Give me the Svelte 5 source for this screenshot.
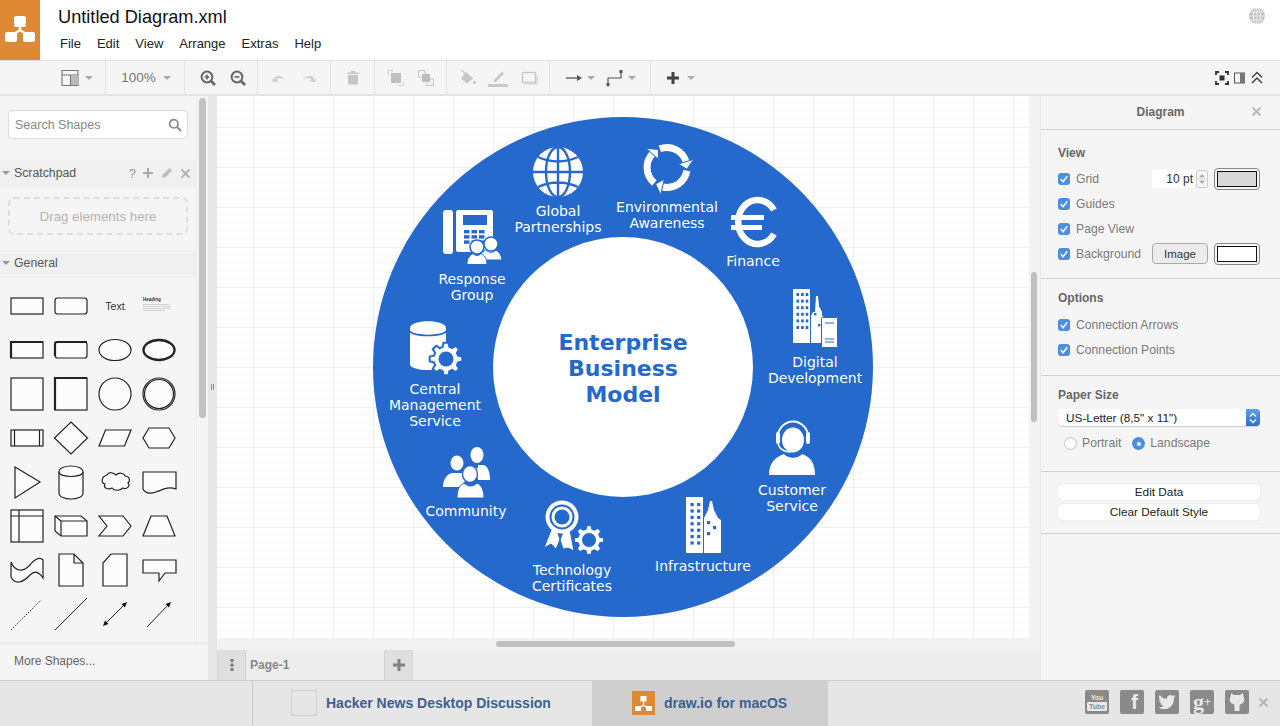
<script>
  const blue = '#2469cb';
  const menu = ['File', 'Edit', 'View', 'Arrange', 'Extras', 'Help'];

  function gear(cx, cy, r, ri, teeth = 8) {
    let d = '';
    const step = (Math.PI * 2) / teeth;
    for (let i = 0; i < teeth; i++) {
      const a = i * step - Math.PI / 2;
      const pts = [
        [ri, a - step * 0.34],
        [r, a - step * 0.19],
        [r, a + step * 0.19],
        [ri, a + step * 0.34]
      ];
      for (const [rad, an] of pts) {
        d += (d ? 'L' : 'M') + (cx + rad * Math.cos(an)).toFixed(1) + ' ' + (cy + rad * Math.sin(an)).toFixed(1);
      }
    }
    return d + 'Z';
  }

  function pol(cx, cy, r, deg) {
    const a = ((deg - 90) * Math.PI) / 180;
    return (cx + r * Math.cos(a)).toFixed(1) + ' ' + (cy + r * Math.sin(a)).toFixed(1);
  }

  const recycle = [95, 215, 335].map((tip) => {
    const cx = 667, cy = 167.5, r = 20;
    const s = tip - 116;
    const e = tip - 22;
    return {
      arc: `M${pol(cx, cy, r, s)}A${r} ${r} 0 0 1 ${pol(cx, cy, r, e)}`,
      head: `M${pol(cx, cy, r + 8, e)}L${pol(cx, cy, r - 8, e)}L${pol(cx, cy, r, tip)}Z`
    };
  });

  const labels = [
    { x: 558, lines: [['Global', 216], ['Partnerships', 232]] },
    { x: 667, lines: [['Environmental', 212], ['Awareness', 228]] },
    { x: 753, lines: [['Finance', 266]] },
    { x: 815, lines: [['Digital', 367], ['Development', 383]] },
    { x: 792, lines: [['Customer', 495], ['Service', 511]] },
    { x: 703, lines: [['Infrastructure', 571]] },
    { x: 572, lines: [['Technology', 575], ['Certificates', 591]] },
    { x: 466, lines: [['Community', 516]] },
    { x: 435, lines: [['Central', 394], ['Management', 410], ['Service', 426]] },
    { x: 472, lines: [['Response', 284], ['Group', 300]] }
  ];

  function grid(x0, y0, cols, rows, dx, dy, w, h) {
    const out = [];
    for (let r = 0; r < rows; r++) for (let c = 0; c < cols; c++) out.push({ x: x0 + c * dx, y: y0 + r * dy, w, h });
    return out;
  }
  const phoneKeys = grid(464, 230, 3, 3, 7.5, 5.2, 5.5, 3.4);
  const digitalWin = grid(796.5, 293, 3, 6, 4.6, 6.6, 2.6, 3);
  const infraWin = grid(690.5, 503, 2, 7, 6.6, 6.4, 3.2, 3.2);
</script>

<div class="app">
  <header class="top">
    <div class="logo">
      <svg width="40" height="60" viewBox="0 0 40 60">
        <path d="M20 26V32M20 30L11 36M20 30L29 36" stroke="#fff" stroke-width="2.4" fill="none" />
        <rect x="14" y="16" width="12" height="11" rx="2" fill="#fff" />
        <rect x="5" y="32" width="12" height="10" rx="2" fill="#fff" />
        <rect x="23" y="32" width="12" height="10" rx="2" fill="#fff" />
      </svg>
    </div>
    <div class="titles">
      <div class="filename">Untitled Diagram.xml</div>
      <nav class="menu">
        {#each menu as m}<span>{m}</span>{/each}
      </nav>
    </div>
    <svg class="globe" width="18" height="18" viewBox="0 0 18 18">
      <circle cx="9" cy="9" r="8" fill="#c4c4c4" />
      <g stroke="#f2f2f2" stroke-width="0.9" fill="none">
        <ellipse cx="9" cy="9" rx="3.6" ry="8" />
        <path d="M9 1V17M1 9H17M2.2 5H15.8M2.2 13H15.8" />
      </g>
    </svg>
  </header>

  <div class="toolbar">
    <div class="tg tg-first">
      <svg width="18" height="18" viewBox="0 0 18 18">
        <path d="M1 1.5H17V16.5H1ZM1 6H17M9.5 6V16.5" fill="none" stroke="#777" stroke-width="1.1" />
        <rect x="10" y="6.5" width="6.5" height="9.5" fill="#bbb" />
      </svg>
      <i class="caret"></i>
    </div>
    <div class="tg tg-zoom"><span class="pct">100%</span><i class="caret"></i></div>
    <div class="tg gap10 tg-mag">
      <svg width="20" height="20" viewBox="0 0 20 20">
        <circle cx="9" cy="9" r="5.4" fill="none" stroke="#666" stroke-width="2" />
        <path d="M13 13L17 17" stroke="#666" stroke-width="2.6" />
        <path d="M6.5 9H11.5M9 6.5V11.5" stroke="#666" stroke-width="1.6" />
      </svg>
      <svg width="20" height="20" viewBox="0 0 20 20">
        <circle cx="9" cy="9" r="5.4" fill="none" stroke="#666" stroke-width="2" />
        <path d="M13 13L17 17" stroke="#666" stroke-width="2.6" />
        <path d="M6.5 9H11.5" stroke="#666" stroke-width="1.6" />
      </svg>
    </div>
    <div class="tg gap10">
      <svg width="20" height="20" viewBox="0 0 20 20">
        <path d="M4 12.5C6 7 12 6.5 16.5 12C13 9.5 9.5 9.5 7.5 11.5L9.5 13.5L3.5 14V8.5Z" fill="#cfcfcf" />
      </svg>
      <svg width="20" height="20" viewBox="0 0 20 20">
        <path d="M16 12.5C14 7 8 6.5 3.5 12C7 9.5 10.5 9.5 12.5 11.5L10.5 13.5L16.5 14V8.5Z" fill="#cfcfcf" />
      </svg>
    </div>
    <div class="tg">
      <svg width="20" height="20" viewBox="0 0 20 20">
        <path d="M4 4.5H16V6H4ZM8 3H12V4.5H8ZM5 7H15V16.5H5Z" fill="#c6c6c6" />
      </svg>
    </div>
    <div class="tg gap10">
      <svg width="20" height="20" viewBox="0 0 20 20">
        <path d="M2.5 7V2.5H7M13 17.5H17.5V13" fill="none" stroke="#d0d0d0" />
        <rect x="5" y="5" width="10" height="10" fill="#c0c0c0" />
      </svg>
      <svg width="20" height="20" viewBox="0 0 20 20">
        <path d="M2.5 2.5H9V9H2.5ZM11 11H17.5V17.5H11Z" fill="none" stroke="#c8c8c8" />
        <rect x="6" y="6" width="8" height="8" fill="#bdbdbd" />
      </svg>
    </div>
    <div class="tg gap10">
      <svg width="20" height="20" viewBox="0 0 20 20">
        <path d="M9 4L16 10.5L10 15.5L4 10.5Z" fill="#c8c8c8" />
        <path d="M4 2L9 6" stroke="#c8c8c8" stroke-width="1.4" />
        <circle cx="17.5" cy="14.5" r="1.5" fill="#c8c8c8" />
      </svg>
      <svg width="22" height="20" viewBox="0 0 22 20">
        <path d="M7 12L15 3.5L17 5.5L9 14H7Z" fill="#c8c8c8" />
        <rect x="1" y="16" width="20" height="3" fill="#c8c8c8" />
      </svg>
      <svg width="20" height="20" viewBox="0 0 20 20">
        <rect x="3.5" y="4.5" width="13" height="10" fill="#f6f6f6" stroke="#c8c8c8" stroke-width="1.4" />
        <path d="M5 16H18V7" fill="none" stroke="#dadada" stroke-width="1.6" />
      </svg>
    </div>
    <div class="tg gap10">
      <div class="ic">
        <svg width="20" height="20" viewBox="0 0 20 20">
          <path d="M2 10H14" stroke="#555" stroke-width="1.3" />
          <path d="M13 7L18 10L13 13Z" fill="#555" />
        </svg>
        <i class="caret"></i>
      </div>
      <div class="ic">
        <svg width="20" height="20" viewBox="0 0 20 20">
          <path d="M3 16V10H16V4" fill="none" stroke="#555" stroke-width="1.2" />
          <rect x="1.5" y="15" width="3" height="3" fill="#555" />
          <rect x="14.5" y="2" width="3" height="3" fill="#555" />
        </svg>
        <i class="caret"></i>
      </div>
    </div>
    <div class="tg tg-plus">
      <svg width="16" height="16" viewBox="0 0 16 16">
        <path d="M8 2V14M2 8H14" stroke="#444" stroke-width="3" />
      </svg>
      <i class="caret"></i>
    </div>
    <div class="spacer"></div>
    <div class="tg-right">
      <svg width="14" height="14" viewBox="0 0 14 14">
        <path d="M1 4V1H4M10 1H13V4M13 10V13H10M4 13H1V10" fill="none" stroke="#333" stroke-width="1.8" />
        <rect x="4.5" y="4.5" width="5" height="5" fill="#333" />
      </svg>
      <svg width="12" height="12" viewBox="0 0 12 12">
        <rect x="0.5" y="1" width="10" height="10" fill="#f5f5f5" stroke="#555" />
        <rect x="6" y="1" width="5" height="10" fill="#777" />
      </svg>
      <svg width="12" height="14" viewBox="0 0 12 14">
        <path d="M1 6.5L6 1.5L11 6.5M1 12L6 7L11 12" fill="none" stroke="#444" stroke-width="1.5" />
      </svg>
    </div>
  </div>

  <div class="main">
    <aside class="side">
      <div class="side-scroll">
        <div class="search">
          <span>Search Shapes</span>
          <svg width="14" height="14" viewBox="0 0 14 14">
            <circle cx="5.8" cy="5.8" r="4.2" fill="none" stroke="#888" stroke-width="1.7" />
            <path d="M9 9L13 13" stroke="#888" stroke-width="2" />
          </svg>
        </div>
        <div class="sec-head scratch">
          <i class="caret small"></i><span class="sec-name">Scratchpad</span>
          <div class="sec-tools">
            <span class="q">?</span>
            <svg width="12" height="12" viewBox="0 0 12 12"><path d="M6 1V11M1 6H11" stroke="#aaa" stroke-width="2" /></svg>
            <svg width="14" height="14" viewBox="0 0 14 14"><path d="M2 12L3 8.5L9.5 2L12 4.5L5.5 11Z" fill="#bbb" /></svg>
            <svg width="11" height="11" viewBox="0 0 11 11"><path d="M1.5 1.5L9.5 9.5M9.5 1.5L1.5 9.5" stroke="#a9b4c0" stroke-width="2" /></svg>
          </div>
        </div>
        <div class="drop">Drag elements here</div>
        <div class="sec-head general"><i class="caret small"></i><span class="sec-name">General</span></div>
        <div class="shapes">
          <svg viewBox="0 0 44 44"><rect x="6" y="14" width="32" height="16" /></svg>
          <svg viewBox="0 0 44 44"><rect x="6" y="14" width="32" height="16" rx="2.5" /></svg>
          <svg viewBox="0 0 44 44"><text class="t" x="22" y="25.5">Text</text></svg>
          <svg viewBox="0 0 44 44">
            <text class="h" x="6" y="17">Heading</text>
            <path class="para" d="M6 20.5H32M6 22.5H34M6 24.5H33M6 26.5H28" />
          </svg>

          <svg viewBox="0 0 44 44"><rect x="6" y="14" width="32" height="16" /><path class="thick" d="M6 30V14H38" /></svg>
          <svg viewBox="0 0 44 44"><rect x="6" y="14" width="32" height="16" rx="2.5" /><path class="thick" d="M6 28V16Q6 14 8 14H38" /></svg>
          <svg viewBox="0 0 44 44"><ellipse cx="22" cy="22" rx="16" ry="10.5" /></svg>
          <svg viewBox="0 0 44 44"><ellipse cx="22" cy="22" rx="15.5" ry="10" stroke-width="2.4" /></svg>

          <svg viewBox="0 0 44 44"><rect x="6" y="6" width="32" height="32" /></svg>
          <svg viewBox="0 0 44 44"><rect x="6" y="6" width="32" height="32" /><path class="thick" d="M6 38V6H38" /></svg>
          <svg viewBox="0 0 44 44"><circle cx="22" cy="22" r="16" /></svg>
          <svg viewBox="0 0 44 44"><circle cx="22" cy="22" r="16" /><circle cx="22" cy="22" r="14.5" /></svg>

          <svg viewBox="0 0 44 44"><rect x="6" y="14" width="32" height="16" /><path d="M9.5 14V30M34.5 14V30" /></svg>
          <svg viewBox="0 0 44 44"><path d="M22 6L38.5 22L22 38L5.5 22Z" /></svg>
          <svg viewBox="0 0 44 44"><path d="M12.5 14H38L31.5 30H6Z" /></svg>
          <svg viewBox="0 0 44 44"><path d="M12 12H32L38 22L32 32H12L6 22Z" /></svg>

          <svg viewBox="0 0 44 44"><path d="M10 7L35 22L10 38Z" /></svg>
          <svg viewBox="0 0 44 44"><path d="M10 12C10 4 34 4 34 12V33C34 41 10 41 10 33Z" /><path d="M10 12C10 18 34 18 34 12" /></svg>
          <svg viewBox="0 0 44 44"><path d="M14 15C16 11 21 13 23 15C26 12 31 13 32 16C36 16 38 20 35 23C38 26 33 30 30 28C27 31 21 31 19 28C15 30 10 28 12 24C8 23 8 17 14 15Z" /></svg>
          <svg viewBox="0 0 44 44"><path d="M6 12H39V29C31 26 25 30 19 32C13 34 8 33 6 29Z" /></svg>

          <svg viewBox="0 0 44 44"><rect x="6" y="6" width="32" height="32" /><path d="M6 12H38M14 6V38" /></svg>
          <svg viewBox="0 0 44 44"><path d="M6 12H32L38 17V32H12L6 27Z" /><path d="M12 17H38M12 17V32M12 17L6 12" /></svg>
          <svg viewBox="0 0 44 44"><path d="M6 12H30L38 22L30 32H6L14 22Z" /></svg>
          <svg viewBox="0 0 44 44"><path d="M14 12H30L38 32H6Z" /></svg>

          <svg viewBox="0 0 44 44"><path d="M6 14C10 24 18 24 24 18C29 12 34 8 38 12V30C34 24 30 22 25 27C18 35 10 37 6 29Z" /></svg>
          <svg viewBox="0 0 44 44"><path d="M10 6H25L34 15V38H10ZM25 6V15H34" /></svg>
          <svg viewBox="0 0 44 44"><path d="M18 6H34V38H10V15Z" /></svg>
          <svg viewBox="0 0 44 44"><path d="M6 12H39V25H28L22 33V25H6Z" /></svg>

          <svg viewBox="0 0 44 44"><path class="line" stroke-dasharray="1.5 1.5" d="M6 38L36 8" /></svg>
          <svg viewBox="0 0 44 44"><path class="line" d="M6 38L38 6" /></svg>
          <svg viewBox="0 0 44 44">
            <path class="line" d="M12 32L32 12" />
            <path class="fillk" d="M34 10L32 15.5L28.5 12ZM10 34L12 28.5L15.5 32Z" />
          </svg>
          <svg viewBox="0 0 44 44">
            <path class="line" d="M10 35L32 12" />
            <path class="fillk" d="M34 10L32 15.5L28.5 12Z" />
          </svg>
        </div>
      </div>
      <div class="thumb-v-side"></div>
      <div class="more">More Shapes...</div>
    </aside>
    <div class="splitter"><span></span></div>

    <div class="center">
      <div class="scroll">
        <div class="canvas">
          <svg class="diagram" width="500" height="500" viewBox="373 117 500 500">
            <circle cx="623" cy="367" r="250" fill={blue} />
            <circle cx="623" cy="367" r="130" fill="#fff" />

            <!-- globe -->
            <circle cx="558" cy="172" r="25" fill="#fff" />
            <g fill="none" stroke={blue} stroke-width="2.4">
              <ellipse cx="558" cy="172" rx="12" ry="25" />
              <path d="M558 147V197M533 172H583M538 157Q558 166 578 157M538 187Q558 178 578 187" />
            </g>

            <!-- recycle -->
            {#each recycle as r}
              <path d={r.arc} fill="none" stroke="#fff" stroke-width="7" />
            {/each}
            {#each recycle as r}
              <path d={r.head} fill="#fff" stroke={blue} stroke-width="1" />
            {/each}

            <!-- euro -->
            <path d="M774 210A19.5 22 0 1 0 774 234" fill="none" stroke="#fff" stroke-width="6.5" />
            <rect x="731" y="215" width="33" height="5" fill="#fff" />
            <rect x="731" y="225" width="31" height="5" fill="#fff" />

            <!-- digital -->
            <rect x="793" y="289" width="17" height="54" fill="#fff" />
            {#each digitalWin as w}<rect x={w.x} y={w.y} width={w.w} height={w.h} fill={blue} />{/each}
            <path d="M811 343V316L813 312H815L816 296H818L819 306L822 312V316L826 318V343Z" fill="#fff" />
            <rect x="814" y="313" width="2.4" height="2.4" fill={blue} />
            <rect x="818" y="324" width="2.4" height="2.4" fill={blue} />
            <rect x="821.5" y="317.5" width="16" height="30" rx="1" fill="#fff" stroke={blue} stroke-width="1" />
            <path d="M825 323H834M825 339H834M825 342H834" stroke={blue} stroke-width="1.2" />

            <!-- customer -->
            <path d="M769 475C769 462 776 457 784 454C788 459 798 459 802 454C810 457 815 462 815 475Z" fill="#fff" />
            <ellipse cx="793" cy="440" rx="11" ry="12.5" fill="#fff" />
            <path d="M777.5 438A15.5 16.5 0 0 1 808.5 438" fill="none" stroke="#fff" stroke-width="2" />
            <rect x="776" y="432" width="4" height="12" rx="2" fill="#fff" />
            <rect x="806" y="432" width="4" height="12" rx="2" fill="#fff" />
            <path d="M778 444C780 450 786 452 791 452" fill="none" stroke="#fff" stroke-width="1.4" />

            <!-- infrastructure -->
            <rect x="686" y="497" width="17" height="56" fill="#fff" />
            {#each infraWin as w}<rect x={w.x} y={w.y} width={w.w} height={w.h} fill={blue} />{/each}
            <path d="M704 553V518L708 510L710 501H712L714 510L718 518L721 520V553Z" fill="#fff" />
            <rect x="707" y="521" width="3.2" height="3.2" fill={blue} />
            <rect x="713" y="526" width="3.2" height="3.2" fill={blue} />
            <rect x="707" y="532" width="3.2" height="3.2" fill={blue} />

            <!-- certificate -->
            <path d="M553 525L544 548L551 544L556 549L564 530ZM570 530L574 551L568 548L563 549L557 530Z" fill="#fff" stroke={blue} stroke-width="1" />
            <circle cx="562" cy="517" r="16.5" fill="#fff" />
            <circle cx="562" cy="517" r="12.5" fill={blue} />
            <circle cx="562" cy="517" r="10.5" fill="#fff" />
            <circle cx="562" cy="517" r="7.5" fill={blue} />
            <path d={gear(589, 540, 15, 11.5)} fill="#fff" stroke={blue} stroke-width="1.5" />
            <circle cx="589" cy="540" r="7" fill={blue} />

            <!-- community -->
            <path d="M443 487C443 478 448 474 452 473L462 473L466 480L460 487ZM490 480H478V465H484C488 467 490 472 490 480Z" fill="#fff" />
            <ellipse cx="457" cy="463" rx="6.5" ry="7.5" fill="#fff" />
            <ellipse cx="477" cy="455" rx="6.5" ry="8" fill="#fff" />
            <path d="M470 466L466 474L478 478L484 470Z" fill="#fff" />
            <ellipse cx="470" cy="474" rx="7.5" ry="8.5" fill="#fff" stroke={blue} stroke-width="1.4" />
            <path d="M457 498C457 489 460 485 464 483C468 487 473 487 477 483C481 485 484 489 484 498Z" fill="#fff" stroke={blue} stroke-width="1" />

            <!-- central -->
            <path d="M410 328C410 319 446 319 446 328V364C446 372 410 372 410 364Z" fill="#fff" />
            <path d="M410 331C412 337 444 337 446 331" fill="none" stroke={blue} stroke-width="1.6" />
            <path d={gear(446, 359, 16.5, 12.5)} fill="#fff" stroke={blue} stroke-width="2" />
            <circle cx="446" cy="359" r="7.5" fill={blue} />

            <!-- phone -->
            <rect x="443" y="210" width="10" height="44" rx="3" fill="#fff" />
            <rect x="456" y="210" width="37" height="42" rx="2" fill="#fff" />
            <rect x="463" y="215" width="24" height="10" fill={blue} />
            {#each phoneKeys as k}<rect x={k.x} y={k.y} width={k.w} height={k.h} fill={blue} />{/each}
            <circle cx="491" cy="244" r="7" fill="#fff" stroke={blue} stroke-width="1.4" />
            <path d="M478 260C480 252 484 251 486 250C489 253 493 253 496 250C499 252 501 254 502 260Z" fill="#fff" stroke={blue} stroke-width="1" />
            <circle cx="477" cy="247" r="7" fill="#fff" stroke={blue} stroke-width="1.6" />
            <path d="M467 264.5C467 258 470 255 473 253.5C475 256 479 256 481 253.5C484 255 487 258 487 264.5Z" fill="#fff" stroke={blue} stroke-width="1" />

            {#each labels as l}
              {#each l.lines as [t, y]}
                <text class="lbl" x={l.x} y={y}>{t}</text>
              {/each}
            {/each}

            <text class="ttl" x="623" y="350">Enterprise</text>
            <text class="ttl" x="623" y="376">Business</text>
            <text class="ttl" x="623" y="402">Model</text>
          </svg>
        </div>
        <div class="thumb-v"></div>
        <div class="thumb-h"></div>
      </div>
      <div class="tabs">
        <div class="tab-btn">
          <svg width="4" height="14" viewBox="0 0 4 14"><path d="M0.5 1H3.5V4H0.5ZM0.5 5.5H3.5V8.5H0.5ZM0.5 10H3.5V13H0.5Z" fill="#777" /></svg>
        </div>
        <div class="tab-page">Page-1</div>
        <div class="tab-btn plus">
          <svg width="14" height="14" viewBox="0 0 14 14"><path d="M7 1V13M1 7H13" stroke="#808080" stroke-width="3" /></svg>
        </div>
      </div>
    </div>

    <aside class="panel">
      <div class="panel-head">
        <span>Diagram</span>
        <svg class="panel-x" width="11" height="11" viewBox="0 0 11 11"><path d="M1.5 1.5L9.5 9.5M9.5 1.5L1.5 9.5" stroke="#b4bcc6" stroke-width="2" /></svg>
      </div>

      <section class="ps s-view">
        <h4>View</h4>
        <div class="row">
          <span class="cb"><svg viewBox="0 0 13 13"><path d="M3 6.5L5.5 9.5L10 3.5" /></svg></span><span class="lab">Grid</span>
          <div class="right">
            <div class="spin"><span class="num">10 pt</span></div>
            <div class="stepper">
              <svg width="12" height="18" viewBox="0 0 12 18"><path d="M2.5 7L6 3L9.5 7ZM2.5 11L6 15L9.5 11Z" fill="#aaa" /><path d="M1 9H11" stroke="#ccc" /></svg>
            </div>
            <div class="swatch"><i class="sw-grey"></i></div>
          </div>
        </div>
        <div class="row"><span class="cb"><svg viewBox="0 0 13 13"><path d="M3 6.5L5.5 9.5L10 3.5" /></svg></span><span class="lab">Guides</span></div>
        <div class="row"><span class="cb"><svg viewBox="0 0 13 13"><path d="M3 6.5L5.5 9.5L10 3.5" /></svg></span><span class="lab">Page View</span></div>
        <div class="row">
          <span class="cb"><svg viewBox="0 0 13 13"><path d="M3 6.5L5.5 9.5L10 3.5" /></svg></span><span class="lab">Background</span>
          <div class="right">
            <div class="imgbtn">Image</div>
            <div class="swatch"><i></i></div>
          </div>
        </div>
      </section>

      <section class="ps s-opt">
        <h4>Options</h4>
        <div class="row"><span class="cb"><svg viewBox="0 0 13 13"><path d="M3 6.5L5.5 9.5L10 3.5" /></svg></span><span class="lab">Connection Arrows</span></div>
        <div class="row"><span class="cb"><svg viewBox="0 0 13 13"><path d="M3 6.5L5.5 9.5L10 3.5" /></svg></span><span class="lab">Connection Points</span></div>
      </section>

      <section class="ps s-paper">
        <h4>Paper Size</h4>
        <div class="select">
          <span>US-Letter (8,5" x 11")</span>
          <div class="sel-h">
            <svg width="8" height="12" viewBox="0 0 8 12"><path d="M1 4.5L4 1.5L7 4.5M1 7.5L4 10.5L7 7.5" fill="none" stroke="#fff" stroke-width="1.3" /></svg>
          </div>
        </div>
        <div class="radios">
          <i class="rd"></i><span class="lab">Portrait</span>
          <i class="rd on"></i><span class="lab">Landscape</span>
        </div>
      </section>

      <section class="ps s-btn">
        <div class="wbtn">Edit Data</div>
        <div class="wbtn">Clear Default Style</div>
      </section>
    </aside>
  </div>

  <footer class="foot">
    <div class="f-empty"></div>
    <div class="f-item f-hn"><i class="ph"></i><span>Hacker News Desktop Discussion</span></div>
    <div class="f-item f-dr">
      <svg width="23" height="24" viewBox="0 0 23 24">
        <rect width="23" height="24" fill="#de8a34" />
        <path d="M11.5 10V14M11.5 14L6 18M11.5 14L17 18" stroke="#fff" stroke-width="1.4" fill="none" />
        <rect x="8.5" y="5" width="6" height="5.5" fill="#fff" />
        <rect x="3" y="15" width="6" height="5" fill="#fff" />
        <rect x="14" y="15" width="6" height="5" fill="#fff" />
      </svg>
      <span>draw.io for macOS</span>
    </div>
    <div class="social">
      <div class="so so-yt"><b>You</b><b class="tube">Tube</b></div>
      <div class="so so-f">f</div>
      <div class="so">
        <svg width="18" height="16" viewBox="0 0 18 16"><path d="M17.5 2.5C16.8 2.8 16 3 15.3 3.1C16 2.6 16.7 1.9 17 1C16.2 1.4 15.5 1.7 14.6 1.9C13 0.2 9 0.8 8.8 4.8C6 4.7 3.3 3.2 1.5 1C0.5 2.6 1 4.9 2.7 5.9C2.1 5.9 1.5 5.7 1 5.5C1 7.3 2.2 8.8 4 9.2C3.4 9.3 2.9 9.4 2.3 9.3C2.8 10.8 4.2 11.8 5.8 11.8C4.3 13 2.3 13.6 0.5 13.4C7 17.5 16.3 13.5 15.8 4.5C16.4 4 17 3.3 17.5 2.5Z" fill="#e9e9e9" /></svg>
      </div>
      <div class="so so-g"><span>g</span><em>+</em></div>
      <div class="so">
        <svg width="18" height="20" viewBox="0 0 18 20"><path d="M3 1L6 3H12L15 1L15.5 5C17 7 16.5 11 13 12C12 12.3 11.5 12.7 11.5 14V19H6.5V14C6.5 12.7 6 12.3 5 12C1.5 11 1 7 2.5 5Z" fill="#e9e9e9" /></svg>
      </div>
      <svg class="f-x" width="11" height="11" viewBox="0 0 11 11"><path d="M1.5 1.5L9.5 9.5M9.5 1.5L1.5 9.5" stroke="#a9b6c6" stroke-width="1.8" /></svg>
    </div>
  </footer>
</div>

<style>
  :global(body) { margin: 0; background: #fff; }
  .app {
    width: 1280px; height: 726px; display: flex; flex-direction: column; overflow: hidden;
    font-family: "Liberation Sans", Arial, sans-serif; color: #333;
  }
  .top { height: 60px; display: flex; position: relative; background: #fff; flex: none; }
  .logo { width: 40px; height: 60px; background: #de8a34; flex: none; }
  .titles { padding-left: 18px; }
  .filename { font-size: 18.2px; line-height: 21px; margin-top: 7px; color: #111; }
  .menu { display: flex; gap: 16px; margin: 8px 0 0 2px; font-size: 13px; line-height: 16px; color: #222; }
  .globe { position: absolute; right: 14px; top: 7px; }

  .toolbar {
    height: 36px; flex: none; box-sizing: border-box; background: #f5f5f5;
    border-top: 1px solid #e2e2e2; border-bottom: 2px solid #e4e4e4;
    display: grid; grid-template-columns: 106px 79px 73px 73px 44px 72px 103px 101px 60px 1fr auto; align-items: stretch;
  }
  .tg { display: flex; align-items: center; justify-content: center; border-right: 1px solid #e4e4e4; box-sizing: border-box; }
  .tg-first { padding-left: 49px; gap: 6px; }
  .tg-zoom { gap: 7px; padding-left: 2px; }
  .tg-mag { padding-left: 4px; }
  .pct { font-size: 13.5px; color: #777; }
  .gap10 { gap: 10px; }
  .ic { display: flex; align-items: center; gap: 3px; }
  .tg-plus { border: 0; gap: 6px; padding-right: 2px; }
  .tg-right { display: flex; align-items: center; gap: 5px; padding-right: 17px; }
  .caret { display: block; width: 0; height: 0; border: 4.5px solid transparent; border-top: 4.5px solid #aaa; border-bottom: 0; }
  .caret.small { border-width: 4.5px 4.5px 0; border-top-color: #999; }

  .main { flex: 1; display: flex; min-height: 0; background: #f5f5f5; }
  .side { width: 208px; flex: none; position: relative; display: flex; flex-direction: column; background: #f5f5f5; }
  .side-scroll { flex: 1; min-height: 0; overflow: hidden; width: 197px; box-sizing: border-box; border-right: 1px solid #ededed; }
  .search {
    margin: 14px 0 0 8px; width: 180px; height: 29px; box-sizing: border-box; background: #fff;
    border: 1px solid #dcdcdc; border-radius: 4px; display: flex; align-items: center; justify-content: space-between;
    padding: 0 5px 0 6px; font-size: 12.5px; color: #888;
  }
  .sec-head { height: 28px; display: flex; align-items: center; background: #f0f0f0; font-size: 12.3px; color: #555; padding: 0 0 2px 2px; box-sizing: border-box; }
  .scratch { margin-top: 21px; }
  .sec-name { margin-left: 4px; }
  .sec-tools { margin-left: auto; display: flex; align-items: center; gap: 6px; padding-right: 5px; }
  .q { color: #999; font-size: 13px; }
  .drop {
    margin: 9px 0 0 8px; width: 180px; height: 38px; box-sizing: border-box; border: 2px dashed #dedede; border-radius: 6px;
    display: flex; align-items: center; justify-content: center; color: #b4b4b4; font-size: 13.3px;
  }
  .general { margin-top: 15px; }
  .shapes { display: grid; grid-template-columns: repeat(4, 44px); grid-auto-rows: 44px; padding: 6px 0 0 5px; }
  .shapes svg { width: 44px; height: 44px; display: block; fill: #fcfcfc; stroke: #222; stroke-width: 1.2; }
  .shapes .thick { fill: none; stroke-width: 2.2; }
  .shapes .line { fill: none; stroke-width: 1; }
  .shapes .fillk { fill: #111; stroke: none; }
  .shapes .t { font-size: 10.5px; text-anchor: middle; fill: #333; stroke: none; }
  .shapes .h { font-size: 4.5px; font-weight: bold; fill: #333; stroke: none; }
  .shapes .para { stroke: #c8c8c8; stroke-width: 0.8; fill: none; }
  .thumb-v-side { position: absolute; left: 199px; top: 2px; width: 7px; height: 320px; border-radius: 4px; background: #c2c2c2; }
  .more {
    height: 38px; flex: none; box-sizing: border-box; border-top: 3px solid #ececec; background: #f5f5f5;
    width: 208px; padding: 6px 0 0 14px; font-size: 12px; color: #666; line-height: 20px;
  }
  .splitter { width: 9px; flex: none; background: #e8e8e8; position: relative; }
  .splitter span {
    position: absolute; left: 2.5px; top: 288px; width: 1px; height: 6px; border-left: 1px solid #888; border-right: 1px solid #888;
  }

  .center { width: 823px; flex: none; display: flex; flex-direction: column; }
  .scroll {
    flex: 1; min-height: 0; position: relative; display: flex; box-sizing: border-box;
    padding: 0 11px 12px 0; background: #f2f2f2;
  }
  .canvas {
    flex: 1; overflow: hidden; background-color: #fff;
    background-image:
      linear-gradient(#eeeeee 1px, transparent 1px),
      linear-gradient(90deg, #eeeeee 1px, transparent 1px),
      linear-gradient(#f9f9f9 1px, transparent 1px),
      linear-gradient(90deg, #f9f9f9 1px, transparent 1px);
    background-size: 40px 40px, 40px 40px, 8px 8px, 8px 8px;
    background-position: 0 31px, 36px 0, 0 7px, 4px 0;
  }
  .diagram { display: block; margin: 21px 0 0 156px; }
  .lbl { font-family: "DejaVu Sans", Verdana, sans-serif; font-size: 14px; fill: #fff; text-anchor: middle; }
  .ttl { font-family: "DejaVu Sans", Verdana, sans-serif; font-size: 22px; font-weight: bold; fill: #2469cb; text-anchor: middle; }
  .thumb-v { position: absolute; left: 814px; top: 176px; width: 6px; height: 150px; border-radius: 3px; background: #c0c0c0; }
  .thumb-h { position: absolute; left: 279px; top: 545px; width: 239px; height: 6px; border-radius: 3px; background: #c0c0c0; }

  .tabs { height: 30px; flex: none; display: flex; background: #ededed; }
  .tab-btn {
    width: 29px; box-sizing: border-box; display: flex; align-items: center; justify-content: center;
    background: #dfdfdf; border-left: 1px solid #d4d4d4; border-right: 1px solid #d4d4d4;
  }
  .tab-page { width: 138px; padding-left: 4px; box-sizing: border-box; font-size: 12px; font-weight: bold; color: #888; line-height: 31px; }

  .panel { width: 240px; flex: none; box-sizing: border-box; background: #f5f5f5; border-left: 1px solid #e8e8e8; }
  .panel-head {
    height: 34px; box-sizing: border-box; border-bottom: 1px solid #d0d0d0; position: relative;
    display: flex; align-items: center; justify-content: center; font-size: 12px; font-weight: bold; color: #666; padding-bottom: 2px;
  }
  .panel-x { position: absolute; right: 18px; top: 10px; }
  .ps { box-sizing: border-box; border-bottom: 1px solid #d0d0d0; padding-left: 17px; padding-right: 20px; }
  .ps h4 { margin: 0; font-size: 12px; font-weight: bold; color: #666; line-height: 24px; height: 24px; }
  .row { height: 25px; display: flex; align-items: center; }
  .s-view { height: 149px; padding-top: 11px; }
  .s-view h4 { margin-bottom: 1px; }
  .s-opt { height: 97px; padding-top: 7px; }
  .s-opt h4 { margin-bottom: 2px; }
  .s-paper { height: 96px; padding-top: 7px; }
  .s-btn { height: 62px; padding-top: 12px; }
  .cb { width: 12px; height: 12px; border-radius: 3px; background: #4a8fe3; flex: none; margin-right: 6px; display: block; }
  .cb svg { display: block; width: 12px; height: 12px; fill: none; stroke: #fff; stroke-width: 1.6; }
  .lab { color: #7a7a7a; font-size: 12.2px; }
  .right { margin-left: auto; display: flex; align-items: center; }
  .spin { width: 44px; height: 18px; background: #fff; display: flex; align-items: center; justify-content: flex-end; font-size: 12px; color: #333; box-sizing: border-box; padding-right: 3px; }
  .stepper { width: 12px; height: 18px; margin-right: 6px; border: 1px solid #ccc; border-radius: 3px; box-sizing: border-box; display: flex; align-items: center; justify-content: center; overflow: hidden; background: #f5f5f5; }
  .swatch {
    width: 46px; height: 22px; box-sizing: border-box; border: 1px solid #888; border-radius: 4px; background: #f5f5f5;
    display: flex; align-items: center; justify-content: center;
  }
  .swatch i { display: block; width: 38px; height: 14px; border: 1px solid #111; background: #fff; }
  .swatch i.sw-grey { background: #d8d8d8; }
  .imgbtn {
    width: 56px; height: 21px; box-sizing: border-box; margin-right: 6px; border: 1px solid #aaa; border-radius: 4px;
    background: #ececec; display: flex; align-items: center; justify-content: center; font-size: 11.5px; color: #333;
  }
  .select {
    height: 17px; margin-top: 2px; background: #fff; border-radius: 4px; display: flex; align-items: center; justify-content: space-between;
    box-shadow: 0 1px 1px #ccc; font-size: 11.8px; color: #222; padding-left: 8px; overflow: hidden;
  }
  .sel-h { width: 14px; height: 17px; background: linear-gradient(#5f9ee9, #2a6fd0); display: flex; align-items: center; justify-content: center; }
  .radios { display: flex; align-items: center; height: 24px; margin-top: 5px; padding-left: 6px; }
  .rd { display: block; width: 13px; height: 13px; box-sizing: border-box; border: 1px solid #c4c4c4; border-radius: 50%; background: #fff; margin-right: 5px; }
  .radios .lab { margin-right: 11px; }
  .rd.on { background: #4a8fe3; border: 0; position: relative; }
  .rd.on::after { content: ""; position: absolute; left: 5px; top: 5px; width: 4px; height: 4px; background: #fff; border-radius: 50%; }
  .wbtn {
    height: 16px; background: #fff; border-radius: 3px; box-shadow: 0 0 1px #aaa; margin-bottom: 4px; display: flex; align-items: center;
    justify-content: center; font-size: 11.8px; color: #222;
  }

  .foot { height: 46px; flex: none; box-sizing: border-box; border-top: 1px solid #cfcfcf; background: #e6e6e6; display: flex; align-items: stretch; }
  .f-empty { width: 252px; border-right: 1px solid #c8c8c8; }
  .f-item { display: flex; align-items: center; font-size: 14px; font-weight: bold; color: #3e5f92; box-sizing: border-box; padding-bottom: 1px; }
  .f-hn { width: 339px; padding-left: 38px; gap: 9px; }
  .ph { display: block; width: 26px; height: 26px; box-sizing: border-box; border: 1px solid #cfcfcf; }
  .f-dr { width: 236px; background: #cfcfcf; padding-left: 40px; gap: 9px; }
  .social { margin-left: auto; display: flex; align-items: center; gap: 11px; padding: 0 11px 3px 0; }
  .so {
    width: 24px; height: 24px; border-radius: 2px; background: #8a8a8a; color: #e9e9e9; position: relative; overflow: hidden;
    display: flex; align-items: center; justify-content: center; font-weight: bold;
  }
  .so-yt { flex-direction: column; font-size: 7px; line-height: 9px; }
  .so-yt .tube { background: #e9e9e9; color: #8a8a8a; padding: 0 2px; border-radius: 1px; }
  .so-f { font-size: 21px; justify-content: flex-end; padding-right: 6px; box-sizing: border-box; line-height: 24px; }
  .so-g { font-family: "Liberation Serif", serif; font-size: 22px; line-height: 20px; overflow: visible; }
  .so-g em { font-style: normal; font-weight: normal; font-size: 12px; font-family: "Liberation Sans", sans-serif; }
  .f-x { margin-left: -2px; }
</style>
